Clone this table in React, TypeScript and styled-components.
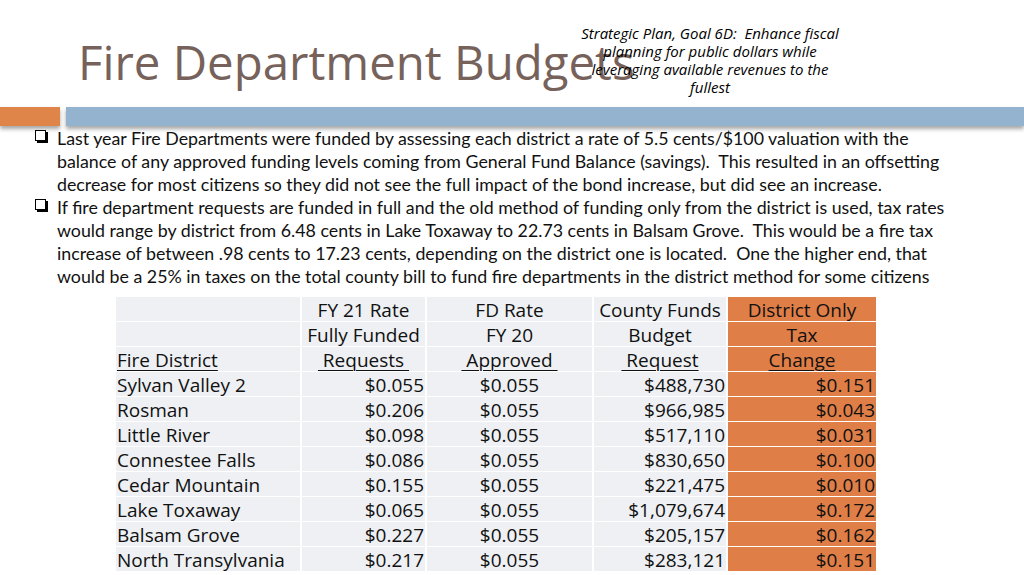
import React from "react";
import styled, { createGlobalStyle } from "styled-components";

const Global = createGlobalStyle`
  html, body { margin: 0; padding: 0; background: #ffffff; }
  body { width: 1024px; height: 575px; overflow: hidden; }
`;

const Slide = styled.div`
  position: relative;
  width: 1024px;
  height: 575px;
  overflow: hidden;
  background: #ffffff;
  display: flex;
  flex-direction: column;
`;

const Header = styled.header`
  position: relative;
  height: 107px;
  padding-left: 78px;
  box-sizing: border-box;
`;

const Title = styled.h1`
  margin: 0;
  padding-top: 30px;
  font-family: "Open Sans", sans-serif;
  font-weight: 400;
  font-size: 47.4px;
  line-height: 64px;
  color: #76625a;
  white-space: nowrap;
`;

const Goal = styled.div`
  position: absolute;
  left: 572px;
  top: 24px;
  width: 276px;
  font-family: "Open Sans", sans-serif;
  font-style: italic;
  font-size: 15px;
  line-height: 18px;
  color: #000000;
  text-align: center;
`;

const BarRow = styled.div`
  display: flex;
  gap: 6px;
  height: 19px;
  flex: none;
`;

const Bar = styled.div<{ $color: string; $width?: string }>`
  background: ${(p) => p.$color};
  width: ${(p) => p.$width ?? "auto"};
  flex: ${(p) => (p.$width ? "none" : "1")};
  box-shadow: 0 3px 4px rgba(0, 0, 0, 0.35);
`;

const Bullets = styled.ul`
  list-style: none;
  margin: 0;
  padding: 1px 0 0 35px;
  font-family: "Lato", sans-serif;
  font-size: 17.8px;
  line-height: 23px;
  color: #111111;
  white-space: nowrap;
`;

const Item = styled.li`
  display: flex;
  gap: 10px;
`;

const Box = styled.span`
  flex: none;
  width: 9px;
  height: 9px;
  margin-top: 3px;
  margin-right: 1px;
  border: 1.5px solid #000;
  box-shadow: 2px 2px 0 #000;
  background: #fff;
`;

const Table = styled.div`
  margin: 9px 0 0 116px;
  width: 760px;
  display: grid;
  grid-template-columns: 184px 123px 165px 132px 148px;
  column-gap: 2px;
  row-gap: 1px;
  grid-auto-rows: 24px;
  font-family: "Open Sans", sans-serif;
  font-size: 19px;
  line-height: 26px;
  color: #111111;
`;

const Cell = styled.div<{ $align?: "left" | "center" | "right"; $hot?: boolean }>`
  background: ${(p) => (p.$hot ? "#e07e47" : "#eef0f3")};
  text-align: ${(p) => p.$align ?? "left"};
  padding: 0 1px;
  white-space: pre;
  box-sizing: border-box;
  height: 24px;
`;

const U = styled.span`
  text-decoration: underline;
  text-underline-offset: 3px;
  text-decoration-thickness: 1px;
`;

const rows: [string, string, string, string, string][] = [
  ["Sylvan Valley 2", "$0.055", "$0.055", "$488,730", "$0.151"],
  ["Rosman", "$0.206", "$0.055", "$966,985", "$0.043"],
  ["Little River", "$0.098", "$0.055", "$517,110", "$0.031"],
  ["Connestee Falls", "$0.086", "$0.055", "$830,650", "$0.100"],
  ["Cedar Mountain", "$0.155", "$0.055", "$221,475", "$0.010"],
  ["Lake Toxaway", "$0.065", "$0.055", "$1,079,674", "$0.172"],
  ["Balsam Grove", "$0.227", "$0.055", "$205,157", "$0.162"],
  ["North Transylvania", "$0.217", "$0.055", "$283,121", "$0.151"],
];

export default function App() {
  return (
    <Slide>
      <Global />
      <Header>
        <Title>Fire Department Budgets</Title>
        <Goal>
          Strategic Plan, Goal 6D:&nbsp; Enhance fiscal
          <br />
          planning for public dollars while
          <br />
          leveraging available revenues to the
          <br />
          fullest
        </Goal>
      </Header>
      <BarRow>
        <Bar $color="#e0854a" $width="60px" />
        <Bar $color="#93b3cf" />
      </BarRow>
      <Bullets>
        <Item>
          <Box />
          <span>
            Last year Fire Departments were funded by assessing each district a rate of 5.5
            cents/$100 valuation with the
            <br />
            balance of any approved funding levels coming from General Fund Balance
            (savings).&nbsp; This resulted in an offsetting
            <br />
            decrease for most citizens so they did not see the full impact of the bond increase, but
            did see an increase.
          </span>
        </Item>
        <Item>
          <Box />
          <span>
            If fire department requests are funded in full and the old method of funding only from
            the district is used, tax rates
            <br />
            would range by district from 6.48 cents in Lake Toxaway to 22.73 cents in Balsam
            Grove.&nbsp; This would be a fire tax
            <br />
            increase of between .98 cents to 17.23 cents, depending on the district one is
            located.&nbsp; One the higher end, that
            <br />
            would be a 25% in taxes on the total county bill to fund fire departments in the district
            method for some citizens
          </span>
        </Item>
      </Bullets>
      <Table>
        <Cell />
        <Cell $align="center">FY 21 Rate</Cell>
        <Cell $align="center">FD Rate</Cell>
        <Cell $align="center">County Funds</Cell>
        <Cell $align="center" $hot>District Only</Cell>

        <Cell />
        <Cell $align="center">Fully Funded</Cell>
        <Cell $align="center">FY 20</Cell>
        <Cell $align="center">Budget</Cell>
        <Cell $align="center" $hot>Tax</Cell>

        <Cell><U>Fire District</U></Cell>
        <Cell $align="center"><U> Requests </U></Cell>
        <Cell $align="center"><U> Approved </U></Cell>
        <Cell $align="center"><U> Request</U></Cell>
        <Cell $align="center" $hot><U>Change</U></Cell>

        {rows.map((r) => (
          <React.Fragment key={r[0]}>
            <Cell>{r[0]}</Cell>
            <Cell $align="right">{r[1]}</Cell>
            <Cell $align="center">{r[2]}</Cell>
            <Cell $align="right">{r[3]}</Cell>
            <Cell $align="right" $hot>{r[4]}</Cell>
          </React.Fragment>
        ))}
      </Table>
    </Slide>
  );
}
